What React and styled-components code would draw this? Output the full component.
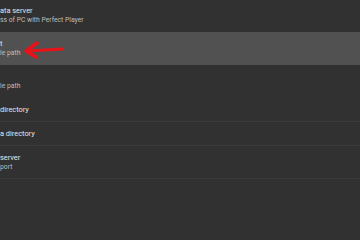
import React from "react";
import styled, { createGlobalStyle } from "styled-components";

const Global = createGlobalStyle`
  html, body { margin: 0; padding: 0; background: #313131; }
  body { width: 360px; height: 240px; overflow: hidden; font-family: Roboto, "Noto Sans", sans-serif; }
`;

const Screen = styled.div`
  position: relative;
  width: 360px;
  height: 240px;
  background: #313131;
  overflow: hidden;
`;

const List = styled.div`
  display: flex;
  flex-direction: column;
`;

const Row = styled.div`
  display: flex;
  flex-direction: column;
  justify-content: center;
  gap: 1px;
  height: ${(p) => p.$h}px;
  box-sizing: border-box;
  background: ${(p) => (p.$active ? "#515151" : "transparent")};
  border-bottom: 1px solid ${(p) => (p.$divider ? "#3b3b3b" : "transparent")};
`;

const Title = styled.div`
  font-size: 7.4px;
  line-height: 9px;
  color: #e6e6e6;
  white-space: nowrap;
  min-height: 9px;
`;

const Sub = styled.div`
  font-size: 6.8px;
  line-height: 9px;
  color: #bdbdbd;
  white-space: nowrap;
`;

const Arrow = styled.svg`
  position: absolute;
  left: 0;
  top: 0;
  pointer-events: none;
`;

const items = [
  { h: 32, title: "ata server", sub: "ss of PC with Perfect Player" },
  { h: 33, title: "t", sub: "le path", active: true },
  { h: 33, title: "", sub: "le path" },
  { h: 24, title: "directory", divider: true },
  { h: 24, title: "a directory", divider: true },
  { h: 33, title: "server", sub: "port", divider: true },
];

export default function App() {
  return (
    <Screen>
      <Global />
      <List>
        {items.map((it, i) => (
          <Row key={i} $h={it.h} $active={it.active} $divider={it.divider}>
            <Title>{it.title}</Title>
            {it.sub !== undefined && <Sub>{it.sub}</Sub>}
          </Row>
        ))}
      </List>
      <Arrow width="360" height="240" viewBox="0 0 360 240">
        <g stroke="#ea1219" strokeLinecap="round" strokeLinejoin="round" fill="none">
          <path d="M28 51 L62 49" strokeWidth="3" />
          <path d="M37 43 L26 51 L36 57" strokeWidth="3.6" />
        </g>
      </Arrow>
    </Screen>
  );
}
